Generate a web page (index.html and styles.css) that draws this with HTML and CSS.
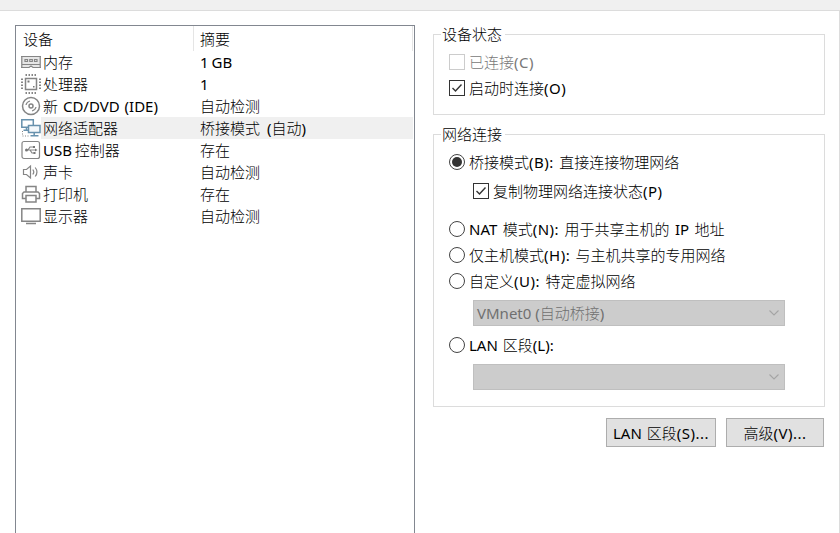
FILE: index.html
```
<!DOCTYPE html>
<html lang="zh-CN">
<head>
<meta charset="utf-8">
<title>虚拟机设置</title>
<link rel="stylesheet" href="styles.css">
</head>
<body>
<div class="tabstrip"></div>
<main class="page">
  <section class="devices">
    <div class="head"><span class="c1">设备</span><span class="c2">摘要</span></div>
    <div class="row"><svg class="ico" viewBox="0 0 20 22"><path d="M0 5h20v12h-8l-2-1.500-2 1.500H0z" fill="#e6e6e6"/><path d="M0 5.500h20M.8 5v11M19.200 5v11M1 13.500h18M0 16.500h8l2-1.500 2 1.500h8" class="s thin"/><path d="M4 8.500h2.500v2H4zM8.800 8.500h2.500v2H8.800zM13.500 8.500H16v2h-2.500z" class="s thin"/></svg><span class="c1">内存</span><span class="c2 tight"><b>1 GB</b></span></div>
    <div class="row"><svg class="ico" viewBox="0 0 20 22"><path d="M4.500 5.500h11v11h-11z" class="s"/><path d="M4.500 2h12M4.500 20h12M1 5.500v12M19 5.500v12" class="s pins"/><path d="M6.500 7.500h2v2h-2zM12 13h1.500v1.500H12z" fill="#777"/></svg><span class="c1">处理器</span><span class="c2"><b>1</b></span></div>
    <div class="row"><svg class="ico" viewBox="0 0 20 22"><circle cx="10" cy="11" r="8.500" class="s"/><circle cx="10" cy="11" r="2" class="s"/><path d="M5 10Q5.500 7 9 6M11 16Q14.500 15 15 12" class="s thin"/></svg><span class="c1">新 <b>CD/DVD (IDE)</b></span><span class="c2">自动检测</span></div>
    <div class="row selected"><svg class="ico" viewBox="0 0 20 22"><path d="M.8 2.800h11.500v7.500H.8zM5.500 10.500v2.500M2.500 13.200h5" class="n"/><path d="M7.500 8.500h11.500v7H7.500zM13.200 16v2.500M9.500 18.800h8" class="n fill"/><path d="M1.500 14v5h6" class="s dots"/></svg><span class="c1">网络适配器</span><span class="c2">桥接模式 <b>(</b>自动<b>)</b></span></div>
    <div class="row"><svg class="ico" viewBox="0 0 20 22"><rect x="1" y="2.500" width="17.500" height="17" rx="2" class="s thin"/><path d="M5 11h10M7 11l2-3h3M9 11l2 3h2" class="s thin"/><circle cx="5.500" cy="11" r="1.500" fill="#777"/><path d="M12 7h2v2h-2zM12.500 13h2v2h-2zM14 9.500l2.500 1.500-2.500 1.500z" fill="#777"/></svg><span class="c1 tight"><b>USB</b> 控制器</span><span class="c2">存在</span></div>
    <div class="row"><svg class="ico" viewBox="0 0 20 22"><path d="M2.500 8.500h3l4-3.500v12l-4-3.500h-3z" class="s thin"/><path d="M11.800 8.500q2 2.500 0 5M14.200 6.500q3.500 4.500 0 9" class="s thin"/></svg><span class="c1">声卡</span><span class="c2">自动检测</span></div>
    <div class="row"><svg class="ico" viewBox="0 0 20 22"><path d="M5 9V3.500h10V9M5 15.500H1.500v-5l1.500-1.500h14l1.500 1.500v5H15M5 12.500h10v6.500H5z" class="s"/></svg><span class="c1">打印机</span><span class="c2">存在</span></div>
    <div class="row"><svg class="ico" viewBox="0 0 20 22"><path d="M.8 3.800h18.400v12.500H.8zM5 18.500h10" class="s"/></svg><span class="c1">显示器</span><span class="c2">自动检测</span></div>
  </section>
  <section class="settings">
    <div class="group status">
      <div class="legend">设备状态</div>
      <div class="opt off"><i class="box"></i><span>已连接<b>(C)</b></span></div>
      <div class="opt"><i class="box on"><svg viewBox="0 0 14 14"><path d="M2.500 7l3 3 6-6.500"/></svg></i><span>启动时连接<b>(O)</b></span></div>
    </div>
    <div class="group network">
      <div class="legend">网络连接</div>
      <div class="opt"><i class="radio on"></i><span>桥接模式<b>(B):</b> 直接连接物理网络</span></div>
      <div class="opt sub"><i class="box on"><svg viewBox="0 0 14 14"><path d="M2.500 7l3 3 6-6.500"/></svg></i><span>复制物理网络连接状态<b>(P)</b></span></div>
      <div class="opt nat"><i class="radio"></i><span><b class="flat">NAT</b> 模式<b>(N):</b> 用于共享主机的 <b class="flat">IP</b> 地址</span></div>
      <div class="opt"><i class="radio"></i><span>仅主机模式<b>(H):</b> 与主机共享的专用网络</span></div>
      <div class="opt"><i class="radio"></i><span>自定义<b>(U):</b> 特定虚拟网络</span></div>
      <div class="select"><span><b class="flat">VMnet0 (</b>自动桥接<b class="flat">)</b></span><svg viewBox="0 0 10 6"><path d="M.5 .5L5 5 9.500 .5"/></svg></div>
      <div class="opt lan"><i class="radio"></i><span><b class="flat">LAN</b> 区段<b class="flat">(L):</b></span></div>
      <div class="select"><span></span><svg viewBox="0 0 10 6"><path d="M.5 .5L5 5 9.500 .5"/></svg></div>
    </div>
    <div class="buttons"><button class="seg"><b class="flat">LAN</b> 区段<b>(S)...</b></button><button class="adv">高级<b>(V)...</b></button></div>
  </section>
</main>
</body>
</html>
```

FILE: styles.css
```
* { box-sizing: border-box; }
body {
  margin: 0;
  height: 533px;
  overflow: hidden;
  background: #fff;
  color: #000;
  font: 15px/22px "Noto Sans", "Noto Sans CJK SC", sans-serif;
  font-weight: 300;
  white-space: nowrap;
}
b { font-weight: 400; letter-spacing: .5px; }
.flat, .devices b { letter-spacing: 0; }
.tabstrip { height: 11px; background: #f0f0f0; border-bottom: 1px solid #dcdcdc; }
.page {
  height: 522px;
  display: flex;
  gap: 18px;
  padding: 14px 14px 0 15px;
  border-right: 1px solid #dcdcdc;
}
.devices { width: 400px; height: 520px; border: 1px solid #828790; flex: none; word-spacing: 1px; }
.head { display: flex; height: 25px; line-height: 26px; padding-left: 7px; margin-right: 1px; border-right: 1px solid #e5e5e5; }
.head .c1 { width: 171px; border-right: 1px solid #e5e5e5; }
.head .c2 { padding-left: 6px; }
.row { display: flex; height: 22px; padding-left: 5px; }
.row .c1 { width: 152px; padding-left: 2px; }
.row .c2 { flex: 1; padding-left: 7px; margin-right: 1px; }
.row .tight { word-spacing: -1px; }
.selected .c1, .selected .c2 { background: #f0f0f0; }
.selected .c2 { word-spacing: 3px; }
.ico { width: 20px; height: 22px; flex: none; }
.s { fill: none; stroke: #858585; stroke-width: 1.5; }
.thin { stroke-width: 1.2; }
.pins { stroke-width: 2; stroke-dasharray: 1.5 1.5; }
.dots { stroke-width: 1; stroke-dasharray: 1 1.5; }
.n { fill: none; stroke: #6791ad; stroke-width: 1.5; }
.fill { fill: #f4f8fb; }
.settings { width: 392px; padding-top: 9px; }
.group { border: 1px solid #dcdcdc; padding: 0 15px; }
.status { height: 81px; margin-bottom: 19px; }
.network { height: 273px; }
.legend { width: 64px; height: 22px; margin: -12px 0 0 -8px; padding-left: 1px; background: #fff; }
.opt { display: flex; align-items: center; gap: 4px; height: 26px; word-spacing: 1.5px; }
.status .opt:nth-child(2), .network .opt:nth-child(2) { margin-top: 4px; }
.off { color: #787878; }
.box { width: 16px; height: 16px; border: 1px solid #333; flex: none; }
.off .box { border-color: #ccc; }
.box svg { display: block; width: 14px; height: 14px; }
.box path { fill: none; stroke: #333; stroke-width: 1.4; }
.radio { width: 16px; height: 16px; border: 1px solid #444; border-radius: 50%; padding: 2px; flex: none; }
.radio.on::before { content: ""; display: block; width: 10px; height: 10px; border-radius: 50%; background: #333; }
.sub { margin: 3px 0 0 24px; }
.nat { margin-top: 12px; }
.select {
  display: flex;
  align-items: center;
  justify-content: space-between;
  width: 312px;
  height: 26px;
  margin: 6px 0 0 24px;
  padding: 0 5px 0 3px;
  background: #ccc;
  border: 1px solid #bfbfbf;
  color: #707070;
}
.select svg { width: 10px; height: 6px; }
.select path { fill: none; stroke: #a5a5a5; stroke-width: 1.1; }
.lan { margin-top: 6px; word-spacing: 1px; }
.buttons { display: flex; justify-content: flex-end; gap: 10px; margin: 11px 1px 0 0; }
button { height: 29px; padding: 0; border: 1px solid #adadad; background: #e1e1e1; color: #000; font: inherit; word-spacing: 1px; }
.seg { width: 110px; }
.adv { width: 98px; }
```
